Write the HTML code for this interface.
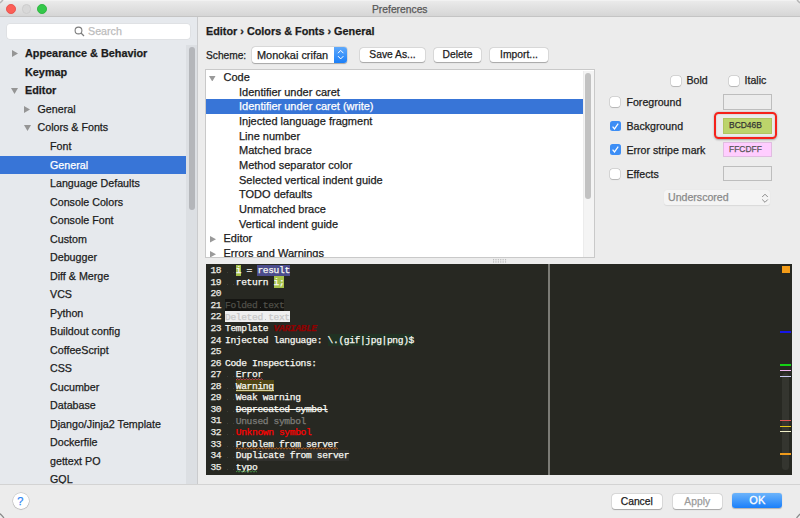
<!DOCTYPE html><html><head><meta charset="utf-8"><style>
html,body{margin:0;padding:0;width:800px;height:518px;overflow:hidden;background:#ececec;}
.t{position:absolute;white-space:pre;-webkit-text-stroke:0.25px currentColor;}
.r{position:absolute;box-sizing:border-box;}
</style></head><body>
<div class="r" style="left:0px;top:0px;width:800px;height:17px;background:linear-gradient(#ececec,#d4d4d4);"></div>
<div class="r" style="left:0px;top:0px;width:800px;height:1px;background:#f2f2f2;"></div>
<div class="r" style="left:0px;top:16px;width:800px;height:1px;background:#c4c4c4;"></div>
<div class="r" style="left:6.2px;top:3.9px;width:9.8px;height:9.8px;border-radius:50%;background:#fc5f57;border:0.5px solid #e9524c;"></div>
<div class="r" style="left:21.7px;top:3.9px;width:9.8px;height:9.8px;border-radius:50%;background:#d8d8d8;border:0.5px solid #cdcdcd;"></div>
<div class="r" style="left:37.1px;top:3.9px;width:9.8px;height:9.8px;border-radius:50%;background:#34c84a;border:0.5px solid #2db640;"></div>
<div class="t" style="left:372px;top:4.78px;font-size:10.3px;line-height:10.3px;color:#585858;font-weight:normal;font-family:'Liberation Sans', sans-serif;">Preferences</div>
<div class="r" style="left:0px;top:17px;width:198px;height:467px;background:#e6e9ed;"></div>
<div class="r" style="left:197px;top:17px;width:1px;height:467px;background:#cacbcd;"></div>
<div class="r" style="left:7px;top:24px;width:183px;height:15px;background:#fff;border-radius:3px;box-shadow:0 0 0 0.5px #d8dadc;"></div>
<svg class="r" style="left:74px;top:26px" width="11" height="11"><circle cx="4.5" cy="4.5" r="3.4" stroke="#7d7d7d" stroke-width="1.1" fill="none"/><path d="M7 7 L10 10" stroke="#7d7d7d" stroke-width="1.3"/></svg>
<div class="t" style="left:88px;top:25.54px;font-size:10.7px;line-height:10.7px;color:#bcbcbc;font-weight:normal;font-family:'Liberation Sans', sans-serif;">Search</div>
<div class="r" style="left:186.2px;top:45px;width:11px;height:439px;background:#dcdfe3;"></div>
<div class="r" style="left:188.6px;top:47.2px;width:6.2px;height:163px;background:#b4b6ba;border-radius:3.1px;"></div>
<div class="r" style="left:0;top:40px;width:186px;height:444px;overflow:hidden;">
<div class="t" style="left:25px;top:8.26px;font-size:10.85px;line-height:10.85px;color:#1c1c1c;font-weight:bold;font-family:'Liberation Sans', sans-serif;">Appearance &amp; Behavior</div>
<svg class="r" style="left:11.5px;top:10.150000000000002px" width="6" height="7"><path d="M0 0 L6 3.5 L0 7 Z" fill="#959595"/></svg>
<div class="t" style="left:25px;top:26.78px;font-size:10.85px;line-height:10.85px;color:#1c1c1c;font-weight:bold;font-family:'Liberation Sans', sans-serif;">Keymap</div>
<div class="t" style="left:25px;top:45.30px;font-size:10.85px;line-height:10.85px;color:#1c1c1c;font-weight:bold;font-family:'Liberation Sans', sans-serif;">Editor</div>
<svg class="r" style="left:11px;top:47.99000000000001px" width="7" height="6"><path d="M0 0 L7 0 L3.5 6 Z" fill="#959595"/></svg>
<div class="t" style="left:37.5px;top:63.95px;font-size:10.7px;line-height:10.7px;color:#1c1c1c;font-weight:normal;font-family:'Liberation Sans', sans-serif;">General</div>
<svg class="r" style="left:24.0px;top:65.71000000000001px" width="6" height="7"><path d="M0 0 L6 3.5 L0 7 Z" fill="#959595"/></svg>
<div class="t" style="left:37.5px;top:82.47px;font-size:10.7px;line-height:10.7px;color:#1c1c1c;font-weight:normal;font-family:'Liberation Sans', sans-serif;">Colors &amp; Fonts</div>
<svg class="r" style="left:23.5px;top:85.03px" width="7" height="6"><path d="M0 0 L7 0 L3.5 6 Z" fill="#959595"/></svg>
<div class="t" style="left:50px;top:100.99px;font-size:10.7px;line-height:10.7px;color:#1c1c1c;font-weight:normal;font-family:'Liberation Sans', sans-serif;">Font</div>
<div class="r" style="left:0px;top:115.57px;width:186px;height:18.6px;background:#3875d7;"></div>
<div class="t" style="left:50px;top:119.51px;font-size:10.7px;line-height:10.7px;color:#ffffff;font-weight:normal;font-family:'Liberation Sans', sans-serif;">General</div>
<div class="t" style="left:50px;top:138.03px;font-size:10.7px;line-height:10.7px;color:#1c1c1c;font-weight:normal;font-family:'Liberation Sans', sans-serif;">Language Defaults</div>
<div class="t" style="left:50px;top:156.55px;font-size:10.7px;line-height:10.7px;color:#1c1c1c;font-weight:normal;font-family:'Liberation Sans', sans-serif;">Console Colors</div>
<div class="t" style="left:50px;top:175.07px;font-size:10.7px;line-height:10.7px;color:#1c1c1c;font-weight:normal;font-family:'Liberation Sans', sans-serif;">Console Font</div>
<div class="t" style="left:50px;top:193.59px;font-size:10.7px;line-height:10.7px;color:#1c1c1c;font-weight:normal;font-family:'Liberation Sans', sans-serif;">Custom</div>
<div class="t" style="left:50px;top:212.11px;font-size:10.7px;line-height:10.7px;color:#1c1c1c;font-weight:normal;font-family:'Liberation Sans', sans-serif;">Debugger</div>
<div class="t" style="left:50px;top:230.63px;font-size:10.7px;line-height:10.7px;color:#1c1c1c;font-weight:normal;font-family:'Liberation Sans', sans-serif;">Diff &amp; Merge</div>
<div class="t" style="left:50px;top:249.15px;font-size:10.7px;line-height:10.7px;color:#1c1c1c;font-weight:normal;font-family:'Liberation Sans', sans-serif;">VCS</div>
<div class="t" style="left:50px;top:267.67px;font-size:10.7px;line-height:10.7px;color:#1c1c1c;font-weight:normal;font-family:'Liberation Sans', sans-serif;">Python</div>
<div class="t" style="left:50px;top:286.19px;font-size:10.7px;line-height:10.7px;color:#1c1c1c;font-weight:normal;font-family:'Liberation Sans', sans-serif;">Buildout config</div>
<div class="t" style="left:50px;top:304.71px;font-size:10.7px;line-height:10.7px;color:#1c1c1c;font-weight:normal;font-family:'Liberation Sans', sans-serif;">CoffeeScript</div>
<div class="t" style="left:50px;top:323.23px;font-size:10.7px;line-height:10.7px;color:#1c1c1c;font-weight:normal;font-family:'Liberation Sans', sans-serif;">CSS</div>
<div class="t" style="left:50px;top:341.75px;font-size:10.7px;line-height:10.7px;color:#1c1c1c;font-weight:normal;font-family:'Liberation Sans', sans-serif;">Cucumber</div>
<div class="t" style="left:50px;top:360.27px;font-size:10.7px;line-height:10.7px;color:#1c1c1c;font-weight:normal;font-family:'Liberation Sans', sans-serif;">Database</div>
<div class="t" style="left:50px;top:378.79px;font-size:10.7px;line-height:10.7px;color:#1c1c1c;font-weight:normal;font-family:'Liberation Sans', sans-serif;">Django/Jinja2 Template</div>
<div class="t" style="left:50px;top:397.31px;font-size:10.7px;line-height:10.7px;color:#1c1c1c;font-weight:normal;font-family:'Liberation Sans', sans-serif;">Dockerfile</div>
<div class="t" style="left:50px;top:415.83px;font-size:10.7px;line-height:10.7px;color:#1c1c1c;font-weight:normal;font-family:'Liberation Sans', sans-serif;">gettext PO</div>
<div class="t" style="left:50px;top:434.35px;font-size:10.7px;line-height:10.7px;color:#1c1c1c;font-weight:normal;font-family:'Liberation Sans', sans-serif;">GQL</div>
</div>
<div class="t" style="left:206px;top:25.58px;font-size:10.83px;line-height:10.83px;color:#1c1c1c;font-weight:bold;font-family:'Liberation Sans', sans-serif;">Editor › Colors &amp; Fonts › General</div>
<div class="t" style="left:206px;top:50.56px;font-size:10.2px;line-height:10.2px;color:#1c1c1c;font-weight:normal;font-family:'Liberation Sans', sans-serif;">Scheme:</div>
<div class="r" style="left:252px;top:47.2px;width:95px;height:15.5px;background:#fff;border-radius:3px;box-shadow:0 0.5px 1px rgba(0,0,0,0.25),0 0 0 0.5px rgba(0,0,0,0.12);"></div>
<div class="r" style="left:334px;top:47.2px;width:13px;height:15.5px;background:linear-gradient(#5fa9fb,#1b7ff8);border-radius:0 3px 3px 0;"></div>
<svg class="r" style="left:336px;top:49.3px" width="10" height="12"><path d="M2 4.2 L4.7 1.4 L7.4 4.2 M2 7.1 L4.7 9.9 L7.4 7.1" stroke="#fff" stroke-width="1" fill="none"/></svg>
<div class="t" style="left:257px;top:49.93px;font-size:10.95px;line-height:10.95px;color:#1c1c1c;font-weight:normal;font-family:'Liberation Sans', sans-serif;">Monokai crifan</div>
<div class="r" style="left:360px;top:47.8px;width:65px;height:14.5px;background:#fff;border-radius:3px;box-shadow:0 0.5px 1px rgba(0,0,0,0.25),0 0 0 0.5px rgba(0,0,0,0.12);"></div>
<div class="t" style="left:360px;top:47.8px;width:65px;height:14.5px;line-height:14.5px;text-align:center;font-size:10.3px;color:#1c1c1c;font-family:'Liberation Sans', sans-serif;">Save As...</div>
<div class="r" style="left:434px;top:47.8px;width:47px;height:14.5px;background:#fff;border-radius:3px;box-shadow:0 0.5px 1px rgba(0,0,0,0.25),0 0 0 0.5px rgba(0,0,0,0.12);"></div>
<div class="t" style="left:434px;top:47.8px;width:47px;height:14.5px;line-height:14.5px;text-align:center;font-size:10.3px;color:#1c1c1c;font-family:'Liberation Sans', sans-serif;">Delete</div>
<div class="r" style="left:490px;top:47.8px;width:58px;height:14.5px;background:#fff;border-radius:3px;box-shadow:0 0.5px 1px rgba(0,0,0,0.25),0 0 0 0.5px rgba(0,0,0,0.12);"></div>
<div class="t" style="left:490px;top:47.8px;width:58px;height:14.5px;line-height:14.5px;text-align:center;font-size:10.3px;color:#1c1c1c;font-family:'Liberation Sans', sans-serif;">Import...</div>
<div class="r" style="left:205px;top:69px;width:389.5px;height:188.5px;background:#fff;border:1px solid #c9c9c9;"></div>
<div class="r" style="left:583px;top:70.5px;width:10.5px;height:186px;background:#f4f4f4;border-left:1px solid #ececec;"></div>
<div class="r" style="left:585.3px;top:73px;width:6px;height:126px;background:#c2c2c2;border-radius:3px;"></div>
<div class="r" style="left:206px;top:70.5px;width:377px;height:186px;overflow:hidden;">
<div class="t" style="left:17.5px;top:1.43px;font-size:11px;line-height:11px;color:#1c1c1c;font-weight:normal;font-family:'Liberation Sans', sans-serif;">Code</div>
<svg class="r" style="left:3.0px;top:5.15px" width="6.5" height="5.5"><path d="M0 0 L6.5 0 L3.25 5.5 Z" fill="#9a9a9a"/></svg>
<div class="t" style="left:33px;top:16.10px;font-size:11px;line-height:11px;color:#1c1c1c;font-weight:normal;font-family:'Liberation Sans', sans-serif;">Identifier under caret</div>
<div class="r" style="left:0px;top:28.990000000000002px;width:377px;height:14.5px;background:#3875d7;"></div>
<div class="t" style="left:33px;top:30.77px;font-size:11px;line-height:11px;color:#fff;font-weight:normal;font-family:'Liberation Sans', sans-serif;">Identifier under caret (write)</div>
<div class="t" style="left:33px;top:45.44px;font-size:11px;line-height:11px;color:#1c1c1c;font-weight:normal;font-family:'Liberation Sans', sans-serif;">Injected language fragment</div>
<div class="t" style="left:33px;top:60.11px;font-size:11px;line-height:11px;color:#1c1c1c;font-weight:normal;font-family:'Liberation Sans', sans-serif;">Line number</div>
<div class="t" style="left:33px;top:74.78px;font-size:11px;line-height:11px;color:#1c1c1c;font-weight:normal;font-family:'Liberation Sans', sans-serif;">Matched brace</div>
<div class="t" style="left:33px;top:89.45px;font-size:11px;line-height:11px;color:#1c1c1c;font-weight:normal;font-family:'Liberation Sans', sans-serif;">Method separator color</div>
<div class="t" style="left:33px;top:104.12px;font-size:11px;line-height:11px;color:#1c1c1c;font-weight:normal;font-family:'Liberation Sans', sans-serif;">Selected vertical indent guide</div>
<div class="t" style="left:33px;top:118.79px;font-size:11px;line-height:11px;color:#1c1c1c;font-weight:normal;font-family:'Liberation Sans', sans-serif;">TODO defaults</div>
<div class="t" style="left:33px;top:133.46px;font-size:11px;line-height:11px;color:#1c1c1c;font-weight:normal;font-family:'Liberation Sans', sans-serif;">Unmatched brace</div>
<div class="t" style="left:33px;top:148.13px;font-size:11px;line-height:11px;color:#1c1c1c;font-weight:normal;font-family:'Liberation Sans', sans-serif;">Vertical indent guide</div>
<div class="t" style="left:17.5px;top:162.80px;font-size:11px;line-height:11px;color:#1c1c1c;font-weight:normal;font-family:'Liberation Sans', sans-serif;">Editor</div>
<svg class="r" style="left:3.5px;top:165.62px" width="6" height="6.5"><path d="M0 0 L6 3.25 L0 6.5 Z" fill="#9a9a9a"/></svg>
<div class="t" style="left:17.5px;top:177.47px;font-size:11px;line-height:11px;color:#1c1c1c;font-weight:normal;font-family:'Liberation Sans', sans-serif;">Errors and Warnings</div>
<svg class="r" style="left:3.5px;top:180.28999999999996px" width="6" height="6.5"><path d="M0 0 L6 3.25 L0 6.5 Z" fill="#9a9a9a"/></svg>
</div>
<svg class="r" style="left:492px;top:258px" width="16" height="6"><rect x="1.0" y="1.2" width="1.1" height="1.1" fill="#b0b0b0"/><rect x="1.0" y="3.4" width="1.1" height="1.1" fill="#b0b0b0"/><rect x="3.4" y="1.2" width="1.1" height="1.1" fill="#b0b0b0"/><rect x="3.4" y="3.4" width="1.1" height="1.1" fill="#b0b0b0"/><rect x="5.8" y="1.2" width="1.1" height="1.1" fill="#b0b0b0"/><rect x="5.8" y="3.4" width="1.1" height="1.1" fill="#b0b0b0"/><rect x="8.2" y="1.2" width="1.1" height="1.1" fill="#b0b0b0"/><rect x="8.2" y="3.4" width="1.1" height="1.1" fill="#b0b0b0"/><rect x="10.6" y="1.2" width="1.1" height="1.1" fill="#b0b0b0"/><rect x="10.6" y="3.4" width="1.1" height="1.1" fill="#b0b0b0"/><rect x="13.0" y="1.2" width="1.1" height="1.1" fill="#b0b0b0"/><rect x="13.0" y="3.4" width="1.1" height="1.1" fill="#b0b0b0"/></svg>
<div class="r" style="left:671px;top:76px;width:10px;height:10px;background:#fff;border-radius:2.5px;box-shadow:0 0 0 0.5px rgba(0,0,0,0.18),0 0.5px 1px rgba(0,0,0,0.15);"></div>
<div class="t" style="left:686.5px;top:75.42px;font-size:10.6px;line-height:10.6px;color:#1c1c1c;font-weight:normal;font-family:'Liberation Sans', sans-serif;">Bold</div>
<div class="r" style="left:728.5px;top:76px;width:10px;height:10px;background:#fff;border-radius:2.5px;box-shadow:0 0 0 0.5px rgba(0,0,0,0.18),0 0.5px 1px rgba(0,0,0,0.15);"></div>
<div class="t" style="left:744.5px;top:75.42px;font-size:10.6px;line-height:10.6px;color:#1c1c1c;font-weight:normal;font-family:'Liberation Sans', sans-serif;">Italic</div>
<div class="r" style="left:610.3px;top:97px;width:10px;height:10px;background:#fff;border-radius:2.5px;box-shadow:0 0 0 0.5px rgba(0,0,0,0.18),0 0.5px 1px rgba(0,0,0,0.15);"></div>
<div class="t" style="left:626.5px;top:96.62px;font-size:10.6px;line-height:10.6px;color:#1c1c1c;font-weight:normal;font-family:'Liberation Sans', sans-serif;">Foreground</div>
<div class="r" style="left:610px;top:120.6px;width:10.5px;height:10.5px;background:#3d8ef5;border-radius:2.5px;"></div>
<svg class="r" style="left:610px;top:120.6px" width="11" height="11"><path d="M2.6 5.6 L4.5 7.9 L8.2 2.6" stroke="#fff" stroke-width="1.2" fill="none"/></svg>
<div class="t" style="left:626.5px;top:120.72px;font-size:10.6px;line-height:10.6px;color:#1c1c1c;font-weight:normal;font-family:'Liberation Sans', sans-serif;">Background</div>
<div class="r" style="left:610px;top:144.4px;width:10.5px;height:10.5px;background:#3d8ef5;border-radius:2.5px;"></div>
<svg class="r" style="left:610px;top:144.4px" width="11" height="11"><path d="M2.6 5.6 L4.5 7.9 L8.2 2.6" stroke="#fff" stroke-width="1.2" fill="none"/></svg>
<div class="t" style="left:626.5px;top:144.92px;font-size:10.6px;line-height:10.6px;color:#1c1c1c;font-weight:normal;font-family:'Liberation Sans', sans-serif;">Error stripe mark</div>
<div class="r" style="left:610.3px;top:168.6px;width:10px;height:10px;background:#fff;border-radius:2.5px;box-shadow:0 0 0 0.5px rgba(0,0,0,0.18),0 0.5px 1px rgba(0,0,0,0.15);"></div>
<div class="t" style="left:626.5px;top:169.12px;font-size:10.6px;line-height:10.6px;color:#1c1c1c;font-weight:normal;font-family:'Liberation Sans', sans-serif;">Effects</div>
<div class="r" style="left:723px;top:94px;width:48.5px;height:15.6px;background:#ececec;border:1px solid #bdbdbd;"></div>
<div class="r" style="left:714.3px;top:112.2px;width:62.6px;height:27.2px;border:2.7px solid #f5221a;border-radius:4.5px;box-shadow:0 0.5px 2px rgba(0,0,0,0.3),inset 0 0 1.5px rgba(0,0,0,0.3);"></div>
<div class="r" style="left:723px;top:118px;width:48.5px;height:15.5px;background:#bcd46b;border:1px solid #b0c560;"></div>
<div class="t" style="left:729px;top:120.14px;font-size:9.4px;line-height:9.4px;color:#333333;font-weight:normal;font-family:'Liberation Sans', sans-serif;transform:scaleX(0.9);transform-origin:0 0;">BCD46B</div>
<div class="r" style="left:723px;top:142.2px;width:48.5px;height:15.3px;background:#ffcdff;border:1px solid #e0bde0;"></div>
<div class="t" style="left:729.4px;top:143.84px;font-size:9.4px;line-height:9.4px;color:#555555;font-weight:normal;font-family:'Liberation Sans', sans-serif;transform:scaleX(0.9);transform-origin:0 0;">FFCDFF</div>
<div class="r" style="left:723px;top:165.6px;width:48.5px;height:15.9px;background:#ececec;border:1px solid #bdbdbd;"></div>
<div class="r" style="left:664px;top:190.4px;width:105.8px;height:14.6px;background:#f4f4f4;border-radius:3px;box-shadow:0 0.5px 1px rgba(0,0,0,0.08);"></div>
<div class="t" style="left:668px;top:192.32px;font-size:10.6px;line-height:10.6px;color:#8a8a8a;font-weight:normal;font-family:'Liberation Sans', sans-serif;">Underscored</div>
<svg class="r" style="left:760.5px;top:192.5px" width="8" height="11"><path d="M1.2 4 L4 1.2 L6.8 4 M1.2 6.5 L4 9.3 L6.8 6.5" stroke="#8a8a8a" stroke-width="1" fill="none"/></svg>
<div class="r" style="left:206px;top:264px;width:585.5px;height:211px;background:#272822;"></div>
<div class="r" style="left:548px;top:264px;width:2px;height:211px;background:#7b7b75;"></div>
<div class="r" style="left:782px;top:265.5px;width:8px;height:7.8px;background:#f39c18;"></div>
<div class="r" style="left:782.3px;top:373px;width:7px;height:97px;background:#34352f;border-radius:3.5px;"></div>
<div class="r" style="left:780.3px;top:331px;width:10.7px;height:1.7px;background:#1515e8;"></div>
<div class="r" style="left:780.3px;top:364px;width:10.7px;height:1.8px;background:#14d114;"></div>
<div class="r" style="left:780.3px;top:370px;width:10.7px;height:1.4px;background:#f2b8f2;"></div>
<div class="r" style="left:780.3px;top:376px;width:10.7px;height:1.4px;background:#c8c8f0;"></div>
<div class="r" style="left:780.3px;top:420px;width:10.7px;height:1.4px;background:#e05555;"></div>
<div class="r" style="left:780.3px;top:425.5px;width:10.7px;height:1.6px;background:#e3c318;"></div>
<div class="r" style="left:780.3px;top:430.6px;width:10.7px;height:1.4px;background:#f0f0c8;"></div>
<div class="r" style="left:780.3px;top:453px;width:10.7px;height:1.5px;background:#ef9a1a;"></div>
<div class="t" style="left:210.4px;top:266.25px;font-size:9.6px;line-height:9.6px;color:#ecece6;font-weight:normal;font-family:'Liberation Mono', monospace;letter-spacing:-0.36px;">18</div>
<div class="t" style="left:210.4px;top:277.80px;font-size:9.6px;line-height:9.6px;color:#ecece6;font-weight:normal;font-family:'Liberation Mono', monospace;letter-spacing:-0.36px;">19</div>
<div class="t" style="left:210.4px;top:289.35px;font-size:9.6px;line-height:9.6px;color:#ecece6;font-weight:normal;font-family:'Liberation Mono', monospace;letter-spacing:-0.36px;">20</div>
<div class="t" style="left:210.4px;top:300.90px;font-size:9.6px;line-height:9.6px;color:#ecece6;font-weight:normal;font-family:'Liberation Mono', monospace;letter-spacing:-0.36px;">21</div>
<div class="t" style="left:210.4px;top:312.45px;font-size:9.6px;line-height:9.6px;color:#ecece6;font-weight:normal;font-family:'Liberation Mono', monospace;letter-spacing:-0.36px;">22</div>
<div class="t" style="left:210.4px;top:324.00px;font-size:9.6px;line-height:9.6px;color:#ecece6;font-weight:normal;font-family:'Liberation Mono', monospace;letter-spacing:-0.36px;">23</div>
<div class="t" style="left:210.4px;top:335.55px;font-size:9.6px;line-height:9.6px;color:#ecece6;font-weight:normal;font-family:'Liberation Mono', monospace;letter-spacing:-0.36px;">24</div>
<div class="t" style="left:210.4px;top:347.10px;font-size:9.6px;line-height:9.6px;color:#ecece6;font-weight:normal;font-family:'Liberation Mono', monospace;letter-spacing:-0.36px;">25</div>
<div class="t" style="left:210.4px;top:358.65px;font-size:9.6px;line-height:9.6px;color:#ecece6;font-weight:normal;font-family:'Liberation Mono', monospace;letter-spacing:-0.36px;">26</div>
<div class="t" style="left:210.4px;top:370.20px;font-size:9.6px;line-height:9.6px;color:#ecece6;font-weight:normal;font-family:'Liberation Mono', monospace;letter-spacing:-0.36px;">27</div>
<div class="t" style="left:210.4px;top:381.75px;font-size:9.6px;line-height:9.6px;color:#ecece6;font-weight:normal;font-family:'Liberation Mono', monospace;letter-spacing:-0.36px;">28</div>
<div class="t" style="left:210.4px;top:393.30px;font-size:9.6px;line-height:9.6px;color:#ecece6;font-weight:normal;font-family:'Liberation Mono', monospace;letter-spacing:-0.36px;">29</div>
<div class="t" style="left:210.4px;top:404.85px;font-size:9.6px;line-height:9.6px;color:#ecece6;font-weight:normal;font-family:'Liberation Mono', monospace;letter-spacing:-0.36px;">30</div>
<div class="t" style="left:210.4px;top:416.40px;font-size:9.6px;line-height:9.6px;color:#ecece6;font-weight:normal;font-family:'Liberation Mono', monospace;letter-spacing:-0.36px;">31</div>
<div class="t" style="left:210.4px;top:427.95px;font-size:9.6px;line-height:9.6px;color:#ecece6;font-weight:normal;font-family:'Liberation Mono', monospace;letter-spacing:-0.36px;">32</div>
<div class="t" style="left:210.4px;top:439.50px;font-size:9.6px;line-height:9.6px;color:#ecece6;font-weight:normal;font-family:'Liberation Mono', monospace;letter-spacing:-0.36px;">33</div>
<div class="t" style="left:210.4px;top:451.05px;font-size:9.6px;line-height:9.6px;color:#ecece6;font-weight:normal;font-family:'Liberation Mono', monospace;letter-spacing:-0.36px;">34</div>
<div class="t" style="left:210.4px;top:462.60px;font-size:9.6px;line-height:9.6px;color:#ecece6;font-weight:normal;font-family:'Liberation Mono', monospace;letter-spacing:-0.36px;">35</div>
<div class="r" style="left:235.8px;top:264.70000000000005px;width:5.4px;height:11.55px;background:#a6c14a;"></div>
<div class="t" style="left:235.8px;top:266.35px;font-size:9.6px;line-height:9.6px;color:#f8f8f2;font-weight:normal;font-family:'Liberation Mono', monospace;letter-spacing:-0.36px;">i</div>
<div class="t" style="left:246.6px;top:266.35px;font-size:9.6px;line-height:9.6px;color:#f8f8f2;font-weight:normal;font-family:'Liberation Mono', monospace;letter-spacing:-0.36px;">=</div>
<div class="r" style="left:257.4px;top:264.70000000000005px;width:32.400000000000006px;height:11.55px;background:#4b4c8c;"></div>
<div class="t" style="left:257.4px;top:266.35px;font-size:9.6px;line-height:9.6px;color:#f8f8f2;font-weight:normal;font-family:'Liberation Mono', monospace;letter-spacing:-0.36px;">result</div>
<div class="t" style="left:235.8px;top:277.90px;font-size:9.6px;line-height:9.6px;color:#f8f8f2;font-weight:normal;font-family:'Liberation Mono', monospace;letter-spacing:-0.36px;">return</div>
<div class="r" style="left:273.6px;top:276.25000000000006px;width:10.8px;height:11.55px;background:#a6c14a;"></div>
<div class="t" style="left:273.6px;top:277.90px;font-size:9.6px;line-height:9.6px;color:#f8f8f2;font-weight:normal;font-family:'Liberation Mono', monospace;letter-spacing:-0.36px;">i;</div>
<div class="r" style="left:225.0px;top:299.35px;width:59.400000000000006px;height:11.55px;background:#151512;"></div>
<div class="t" style="left:225.0px;top:301.00px;font-size:9.6px;line-height:9.6px;color:#505049;font-weight:normal;font-family:'Liberation Mono', monospace;letter-spacing:-0.36px;">Folded text</div>
<div class="r" style="left:225.0px;top:310.90000000000003px;width:64.80000000000001px;height:11.55px;background:#efefef;"></div>
<div class="t" style="left:225.0px;top:312.55px;font-size:9.6px;line-height:9.6px;color:#c8c8c8;font-weight:normal;font-family:'Liberation Mono', monospace;letter-spacing:-0.36px;">Deleted text</div>
<div class="t" style="left:225.0px;top:324.10px;font-size:9.6px;line-height:9.6px;color:#f8f8f2;font-weight:normal;font-family:'Liberation Mono', monospace;letter-spacing:-0.36px;">Template</div>
<div class="t" style="left:273.6px;top:324.10px;font-size:9.6px;line-height:9.6px;color:#8f0000;font-weight:bold;font-family:'Liberation Mono', monospace;font-style:italic;letter-spacing:-0.36px;">VARIABLE</div>
<div class="t" style="left:225.0px;top:335.65px;font-size:9.6px;line-height:9.6px;color:#f8f8f2;font-weight:normal;font-family:'Liberation Mono', monospace;letter-spacing:-0.36px;">Injected language:</div>
<div class="r" style="left:327.6px;top:334.00000000000006px;width:86.4px;height:11.55px;background:#203223;"></div>
<div class="t" style="left:327.6px;top:335.65px;font-size:9.6px;line-height:9.6px;color:#f8f8f2;font-weight:normal;font-family:'Liberation Mono', monospace;letter-spacing:-0.36px;">\.(gif|jpg|png)$</div>
<div class="t" style="left:225.0px;top:358.75px;font-size:9.6px;line-height:9.6px;color:#f8f8f2;font-weight:normal;font-family:'Liberation Mono', monospace;letter-spacing:-0.36px;">Code Inspections:</div>
<div class="t" style="left:235.8px;top:370.30px;font-size:9.6px;line-height:9.6px;color:#f8f8f2;font-weight:normal;font-family:'Liberation Mono', monospace;letter-spacing:-0.36px;">Error</div>
<svg class="r" style="left:235.8px;top:377.85px" width="27.0" height="3"><path d="M0 2 L1.50 0.8 L3.00 2.2 L4.50 0.8 L6.00 2.2 L7.50 0.8 L9.00 2.2 L10.50 0.8 L12.00 2.2 L13.50 0.8 L15.00 2.2 L16.50 0.8 L18.00 2.2 L19.50 0.8 L21.00 2.2 L22.50 0.8 L24.00 2.2 L25.50 0.8 L27.00 2.2" stroke="#d84a4a" stroke-width="0.9" fill="none"/></svg>
<div class="r" style="left:235.8px;top:380.20000000000005px;width:37.800000000000004px;height:11.55px;background:#4f4614;"></div>
<div class="t" style="left:235.8px;top:381.85px;font-size:9.6px;line-height:9.6px;color:#f8f8f2;font-weight:normal;font-family:'Liberation Mono', monospace;letter-spacing:-0.36px;">Warning</div>
<div class="r" style="left:235.8px;top:389.70000000000005px;width:37.800000000000004px;height:1px;background:#d6cf9f;"></div>
<div class="t" style="left:235.8px;top:393.40px;font-size:9.6px;line-height:9.6px;color:#f8f8f2;font-weight:normal;font-family:'Liberation Mono', monospace;letter-spacing:-0.36px;">Weak warning</div>
<div class="t" style="left:235.8px;top:404.95px;font-size:9.6px;line-height:9.6px;color:#f8f8f2;font-weight:normal;font-family:'Liberation Mono', monospace;letter-spacing:-0.36px;text-decoration:line-through;">Deprecated symbol</div>
<div class="t" style="left:235.8px;top:416.50px;font-size:9.6px;line-height:9.6px;color:#7e7e7a;font-weight:normal;font-family:'Liberation Mono', monospace;letter-spacing:-0.36px;">Unused symbol</div>
<div class="t" style="left:235.8px;top:428.05px;font-size:9.6px;line-height:9.6px;color:#ff0000;font-weight:normal;font-family:'Liberation Mono', monospace;letter-spacing:-0.36px;">Unknown symbol</div>
<div class="t" style="left:235.8px;top:439.60px;font-size:9.6px;line-height:9.6px;color:#f8f8f2;font-weight:normal;font-family:'Liberation Mono', monospace;letter-spacing:-0.36px;">Problem from server</div>
<svg class="r" style="left:235.8px;top:447.15px" width="102.6" height="3"><path d="M0 2 L1.50 0.8 L3.00 2.2 L4.50 0.8 L6.00 2.2 L7.50 0.8 L9.00 2.2 L10.50 0.8 L12.00 2.2 L13.50 0.8 L15.00 2.2 L16.50 0.8 L18.00 2.2 L19.50 0.8 L21.00 2.2 L22.50 0.8 L24.00 2.2 L25.50 0.8 L27.00 2.2 L28.50 0.8 L30.00 2.2 L31.50 0.8 L33.00 2.2 L34.50 0.8 L36.00 2.2 L37.50 0.8 L39.00 2.2 L40.50 0.8 L42.00 2.2 L43.50 0.8 L45.00 2.2 L46.50 0.8 L48.00 2.2 L49.50 0.8 L51.00 2.2 L52.50 0.8 L54.00 2.2 L55.50 0.8 L57.00 2.2 L58.50 0.8 L60.00 2.2 L61.50 0.8 L63.00 2.2 L64.50 0.8 L66.00 2.2 L67.50 0.8 L69.00 2.2 L70.50 0.8 L72.00 2.2 L73.50 0.8 L75.00 2.2 L76.50 0.8 L78.00 2.2 L79.50 0.8 L81.00 2.2 L82.50 0.8 L84.00 2.2 L85.50 0.8 L87.00 2.2 L88.50 0.8 L90.00 2.2 L91.50 0.8 L93.00 2.2 L94.50 0.8 L96.00 2.2 L97.50 0.8 L99.00 2.2 L100.50 0.8 L102.00 2.2 L103.50 0.8" stroke="#c8641e" stroke-width="0.9" fill="none"/></svg>
<div class="r" style="left:235.8px;top:449.50000000000006px;width:113.4px;height:11.55px;background:#30302c;"></div>
<div class="t" style="left:235.8px;top:451.15px;font-size:9.6px;line-height:9.6px;color:#f8f8f2;font-weight:normal;font-family:'Liberation Mono', monospace;letter-spacing:-0.36px;">Duplicate from server</div>
<div class="t" style="left:235.8px;top:462.70px;font-size:9.6px;line-height:9.6px;color:#f8f8f2;font-weight:normal;font-family:'Liberation Mono', monospace;letter-spacing:-0.36px;">typo</div>
<svg class="r" style="left:235.8px;top:470.25px" width="21.6" height="3"><path d="M0 2 L1.50 0.8 L3.00 2.2 L4.50 0.8 L6.00 2.2 L7.50 0.8 L9.00 2.2 L10.50 0.8 L12.00 2.2 L13.50 0.8 L15.00 2.2 L16.50 0.8 L18.00 2.2 L19.50 0.8 L21.00 2.2 L22.50 0.8" stroke="#4a9a4a" stroke-width="0.9" fill="none"/></svg>
<div class="r" style="left:259.59999999999997px;top:307.25px;width:1px;height:1px;background:#4d4d48;"></div>
<div class="r" style="left:265.0px;top:318.8px;width:1px;height:1px;background:#c0c0c0;"></div>
<div class="r" style="left:227.2px;top:272.40000000000003px;width:1px;height:1px;background:#3d3d36;"></div>
<div class="r" style="left:232.6px;top:272.40000000000003px;width:1px;height:1px;background:#3d3d36;"></div>
<div class="r" style="left:227.2px;top:283.95000000000005px;width:1px;height:1px;background:#3d3d36;"></div>
<div class="r" style="left:232.6px;top:283.95000000000005px;width:1px;height:1px;background:#3d3d36;"></div>
<div class="r" style="left:227.2px;top:376.35px;width:1px;height:1px;background:#3d3d36;"></div>
<div class="r" style="left:232.6px;top:376.35px;width:1px;height:1px;background:#3d3d36;"></div>
<div class="r" style="left:227.2px;top:387.90000000000003px;width:1px;height:1px;background:#3d3d36;"></div>
<div class="r" style="left:232.6px;top:387.90000000000003px;width:1px;height:1px;background:#3d3d36;"></div>
<div class="r" style="left:227.2px;top:399.45000000000005px;width:1px;height:1px;background:#3d3d36;"></div>
<div class="r" style="left:232.6px;top:399.45000000000005px;width:1px;height:1px;background:#3d3d36;"></div>
<div class="r" style="left:227.2px;top:411.00000000000006px;width:1px;height:1px;background:#3d3d36;"></div>
<div class="r" style="left:232.6px;top:411.00000000000006px;width:1px;height:1px;background:#3d3d36;"></div>
<div class="r" style="left:227.2px;top:422.55px;width:1px;height:1px;background:#3d3d36;"></div>
<div class="r" style="left:232.6px;top:422.55px;width:1px;height:1px;background:#3d3d36;"></div>
<div class="r" style="left:227.2px;top:434.1000000000001px;width:1px;height:1px;background:#3d3d36;"></div>
<div class="r" style="left:232.6px;top:434.1000000000001px;width:1px;height:1px;background:#3d3d36;"></div>
<div class="r" style="left:227.2px;top:445.65000000000003px;width:1px;height:1px;background:#3d3d36;"></div>
<div class="r" style="left:232.6px;top:445.65000000000003px;width:1px;height:1px;background:#3d3d36;"></div>
<div class="r" style="left:227.2px;top:457.20000000000005px;width:1px;height:1px;background:#3d3d36;"></div>
<div class="r" style="left:232.6px;top:457.20000000000005px;width:1px;height:1px;background:#3d3d36;"></div>
<div class="r" style="left:227.2px;top:468.75000000000006px;width:1px;height:1px;background:#3d3d36;"></div>
<div class="r" style="left:232.6px;top:468.75000000000006px;width:1px;height:1px;background:#3d3d36;"></div>
<div class="r" style="left:0px;top:483.5px;width:800px;height:1px;background:#d3d3d3;"></div>
<div class="r" style="left:13px;top:493px;width:15.5px;height:15.5px;border-radius:50%;background:#fff;box-shadow:0 0 0 0.5px rgba(0,0,0,0.2),0 0.5px 1px rgba(0,0,0,0.2);"></div>
<div class="t" style="left:17.3px;top:496.18px;font-size:11px;line-height:11px;color:#2d86f5;font-weight:normal;font-family:'Liberation Sans', sans-serif;">?</div>
<div class="r" style="left:612px;top:493.5px;width:49.5px;height:15px;background:#fff;border-radius:3px;box-shadow:0 0.5px 1px rgba(0,0,0,0.25),0 0 0 0.5px rgba(0,0,0,0.12);"></div>
<div class="t" style="left:612px;top:493.5px;width:49.5px;height:15px;line-height:15px;text-align:center;font-size:10.3px;color:#1c1c1c;font-family:'Liberation Sans', sans-serif;">Cancel</div>
<div class="r" style="left:672.5px;top:493.5px;width:49.5px;height:15px;background:#fff;border-radius:3px;box-shadow:0 0.5px 1px rgba(0,0,0,0.25),0 0 0 0.5px rgba(0,0,0,0.12);"></div>
<div class="t" style="left:672.5px;top:493.5px;width:49.5px;height:15px;line-height:15px;text-align:center;font-size:10.3px;color:#9b9b9b;font-family:'Liberation Sans', sans-serif;">Apply</div>
<div class="r" style="left:732.3px;top:493.2px;width:50px;height:15.3px;background:linear-gradient(#6cb4fb,#1a7ffa);border-radius:3px;box-shadow:0 0.5px 1px rgba(0,0,0,0.25);"></div>
<div class="t" style="left:732.3px;top:493.2px;width:50px;height:15.3px;line-height:15.3px;text-align:center;font-size:11px;color:#fff;-webkit-text-stroke:0.3px #fff;font-family:'Liberation Sans', sans-serif;">OK</div>
<svg class="r" style="left:795px;top:512px" width="5" height="6"><path d="M1.5 6 L5 2" stroke="#8a8a8a" stroke-width="1.2"/></svg>
<svg class="r" style="left:0px;top:512px" width="5" height="6"><path d="M0 1.5 L4 6" stroke="#8a8a8a" stroke-width="1.2"/></svg>
<svg class="r" style="left:0px;top:0px" width="4" height="4"><path d="M0 3 L3 0" stroke="#b5b5b5" stroke-width="1.5"/></svg>
<svg class="r" style="left:796px;top:0px" width="4" height="4"><path d="M1 0 L4 3" stroke="#b5b5b5" stroke-width="1.5"/></svg>
</body></html>
